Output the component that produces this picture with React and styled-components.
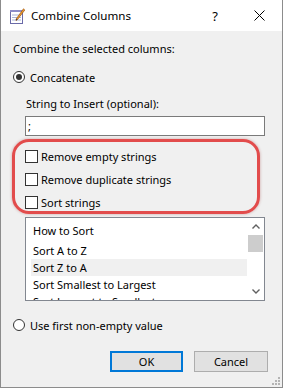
import React from 'react';
import styled, { createGlobalStyle } from 'styled-components';

const Global = createGlobalStyle`
  html, body { margin: 0; padding: 0; background: #ffffff; }
  body { font-family: "Noto Sans", "Segoe UI", sans-serif; font-size: 11px; color: #000; }
  * { box-sizing: border-box; }
`;

const Window = styled.div`
  position: relative;
  width: 283px;
  height: 388px;
  display: flex;
  flex-direction: column;
  border: 1px solid #8c8c8c;
  border-top: none;
  background: #f0f0f0;
`;

const TitleBar = styled.div`
  height: 31px;
  flex: none;
  display: flex;
  align-items: center;
  background: #ffffff;
  padding-left: 8px;
`;

const TitleText = styled.div`
  margin-left: 6px;
  font-size: 11.6px;
  line-height: 16px;
  flex: 1;
`;

const CaptionButton = styled.div`
  width: ${p => p.$w}px;
  height: 31px;
  display: flex;
  align-items: center;
  justify-content: center;
  font-size: 13px;
`;

const Body = styled.div`
  flex: 1;
  display: flex;
  flex-direction: column;
  padding: 10px 14px 0 12px;
`;

const Text = styled.div`
  line-height: 16px;
  white-space: nowrap;
`;

const RadioRow = styled.div`
  display: flex;
  align-items: center;
  height: 16px;
  margin-top: ${p => p.$mt}px;
  gap: 5px;
`;

const RadioCircle = styled.span`
  width: 12px;
  height: 12px;
  border: 1px solid #333;
  border-radius: 50%;
  background: #fff;
  display: flex;
  align-items: center;
  justify-content: center;
  &::after {
    content: '';
    width: 6px;
    height: 6px;
    border-radius: 50%;
    background: ${p => (p.$checked ? '#333' : 'transparent')};
  }
`;

const FieldLabel = styled(Text)`
  margin: 11px 0 0 13px;
`;

const TextInput = styled.div`
  margin: 4px 0 0 12px;
  width: 240px;
  height: 20px;
  border: 1px solid #7a7a7a;
  background: #fff;
  padding-left: 2px;
  line-height: 18px;
`;

const Highlight = styled.div`
  margin: 3px 0 0 -1px;
  width: 248px;
  height: 75px;
  border: 3px solid #e24c4c;
  border-radius: 17px;
  box-shadow: 0 0 3px rgba(140, 20, 20, 0.35);
  padding: 6px 0 0 10px;
  display: flex;
  flex-direction: column;
  gap: 7px;
`;

const CheckRow = styled.div`
  display: flex;
  align-items: center;
  height: 16px;
  gap: 3px;
`;

const CheckBox = styled.span`
  width: 13px;
  height: 13px;
  border: 1px solid #333;
  background: #fff;
`;

const ListBox = styled.div`
  margin: 3px 0 0 12px;
  width: 240px;
  height: 84px;
  border: 1px solid #828790;
  background: #fff;
  display: flex;
`;

const ListContent = styled.div`
  flex: 1;
  overflow: hidden;
  padding: 4px 0 0 5px;
`;

const ListItem = styled.div`
  height: 17px;
  line-height: 17px;
  padding-left: 2px;
  white-space: nowrap;
  background: ${p => (p.$selected ? '#f0f0f0' : 'transparent')};
  margin-bottom: ${p => (p.$header ? 3 : 0)}px;
`;

const ScrollBar = styled.div`
  width: 17px;
  display: flex;
  flex-direction: column;
  background: #fff;
`;

const ScrollArrow = styled.div`
  height: 17px;
  display: flex;
  align-items: center;
  justify-content: center;
`;

const ScrollThumb = styled.div`
  height: 17px;
  margin: 0 1px;
  background: #cdcdcd;
`;

const ScrollTrack = styled.div`
  flex: 1;
`;

const ButtonRow = styled.div`
  margin-top: 18px;
  display: flex;
  justify-content: flex-end;
  gap: 11px;
`;

const Button = styled.div`
  width: ${p => p.$w}px;
  height: 21px;
  background: #e1e1e1;
  border: ${p => (p.$default ? '2px solid #0078d7' : '1px solid #adadad')};
  display: flex;
  align-items: center;
  justify-content: center;
  line-height: 16px;
`;

const Gripper = styled.svg`
  position: absolute;
  right: 1px;
  bottom: 1px;
`;

const AppIcon = () => (
  <svg width="16" height="16" viewBox="0 0 16 16">
    <rect x="1.5" y="2.5" width="12" height="13" fill="#fff" stroke="#6a6aa8" />
    <rect x="1" y="2" width="13" height="2" fill="#8c8cc8" />
    <line x1="3" y1="7" x2="12" y2="7" stroke="#a8b4d8" />
    <line x1="3" y1="9.5" x2="12" y2="9.5" stroke="#a8b4d8" />
    <line x1="3" y1="12" x2="12" y2="12" stroke="#a8b4d8" />
    <path d="M14.5 0.8 L15.8 2 L8.5 11.5 L7 12.5 L7.3 10.8 Z" fill="#f0a030" stroke="#9a5010" strokeWidth="0.7" />
    <path d="M7.3 10.8 L7 12.5 L8.5 11.5 Z" fill="#333" />
  </svg>
);

const CloseGlyph = () => (
  <svg width="11" height="11" viewBox="0 0 11 11">
    <path d="M0.5 0.5 L10.5 10.5 M10.5 0.5 L0.5 10.5" stroke="#000" strokeWidth="1" />
  </svg>
);

const Chevron = ({ up }) => (
  <svg width="8" height="5" viewBox="0 0 8 5">
    <path d={up ? 'M0.5 4.5 L4 1 L7.5 4.5' : 'M0.5 0.5 L4 4 L7.5 0.5'} fill="none" stroke="#606060" strokeWidth="1.4" />
  </svg>
);

const items = ['Sort A to Z', 'Sort Z to A', 'Sort Smallest to Largest', 'Sort Largest to Smallest'];

export default function App() {
  return (
    <>
      <Global />
      <Window>
        <TitleBar>
          <AppIcon />
          <TitleText>Combine Columns</TitleText>
          <CaptionButton $w={42}>?</CaptionButton>
          <CaptionButton $w={46}><CloseGlyph /></CaptionButton>
        </TitleBar>
        <Body>
          <Text>Combine the selected columns:</Text>
          <RadioRow $mt={12}>
            <RadioCircle $checked />
            <span>Concatenate</span>
          </RadioRow>
          <FieldLabel>String to Insert (optional):</FieldLabel>
          <TextInput>;</TextInput>
          <Highlight>
            <CheckRow><CheckBox /><span>Remove empty strings</span></CheckRow>
            <CheckRow><CheckBox /><span>Remove duplicate strings</span></CheckRow>
            <CheckRow><CheckBox /><span>Sort strings</span></CheckRow>
          </Highlight>
          <ListBox>
            <ListContent>
              <ListItem $header>How to Sort</ListItem>
              {items.map((t, i) => (
                <ListItem key={t} $selected={i === 1}>{t}</ListItem>
              ))}
            </ListContent>
            <ScrollBar>
              <ScrollArrow><Chevron up /></ScrollArrow>
              <ScrollThumb />
              <ScrollTrack />
              <ScrollArrow><Chevron /></ScrollArrow>
            </ScrollBar>
          </ListBox>
          <RadioRow $mt={16}>
            <RadioCircle />
            <span>Use first non-empty value</span>
          </RadioRow>
          <ButtonRow>
            <Button $w={73} $default>OK</Button>
            <Button $w={74}>Cancel</Button>
          </ButtonRow>
        </Body>
        <Gripper width="10" height="10" viewBox="0 0 10 10">
          <g fill="#b4b4b4">
            <rect x="7" y="1" width="2" height="2" />
            <rect x="4" y="4" width="2" height="2" />
            <rect x="7" y="4" width="2" height="2" />
            <rect x="1" y="7" width="2" height="2" />
            <rect x="4" y="7" width="2" height="2" />
            <rect x="7" y="7" width="2" height="2" />
          </g>
        </Gripper>
      </Window>
    </>
  );
}
